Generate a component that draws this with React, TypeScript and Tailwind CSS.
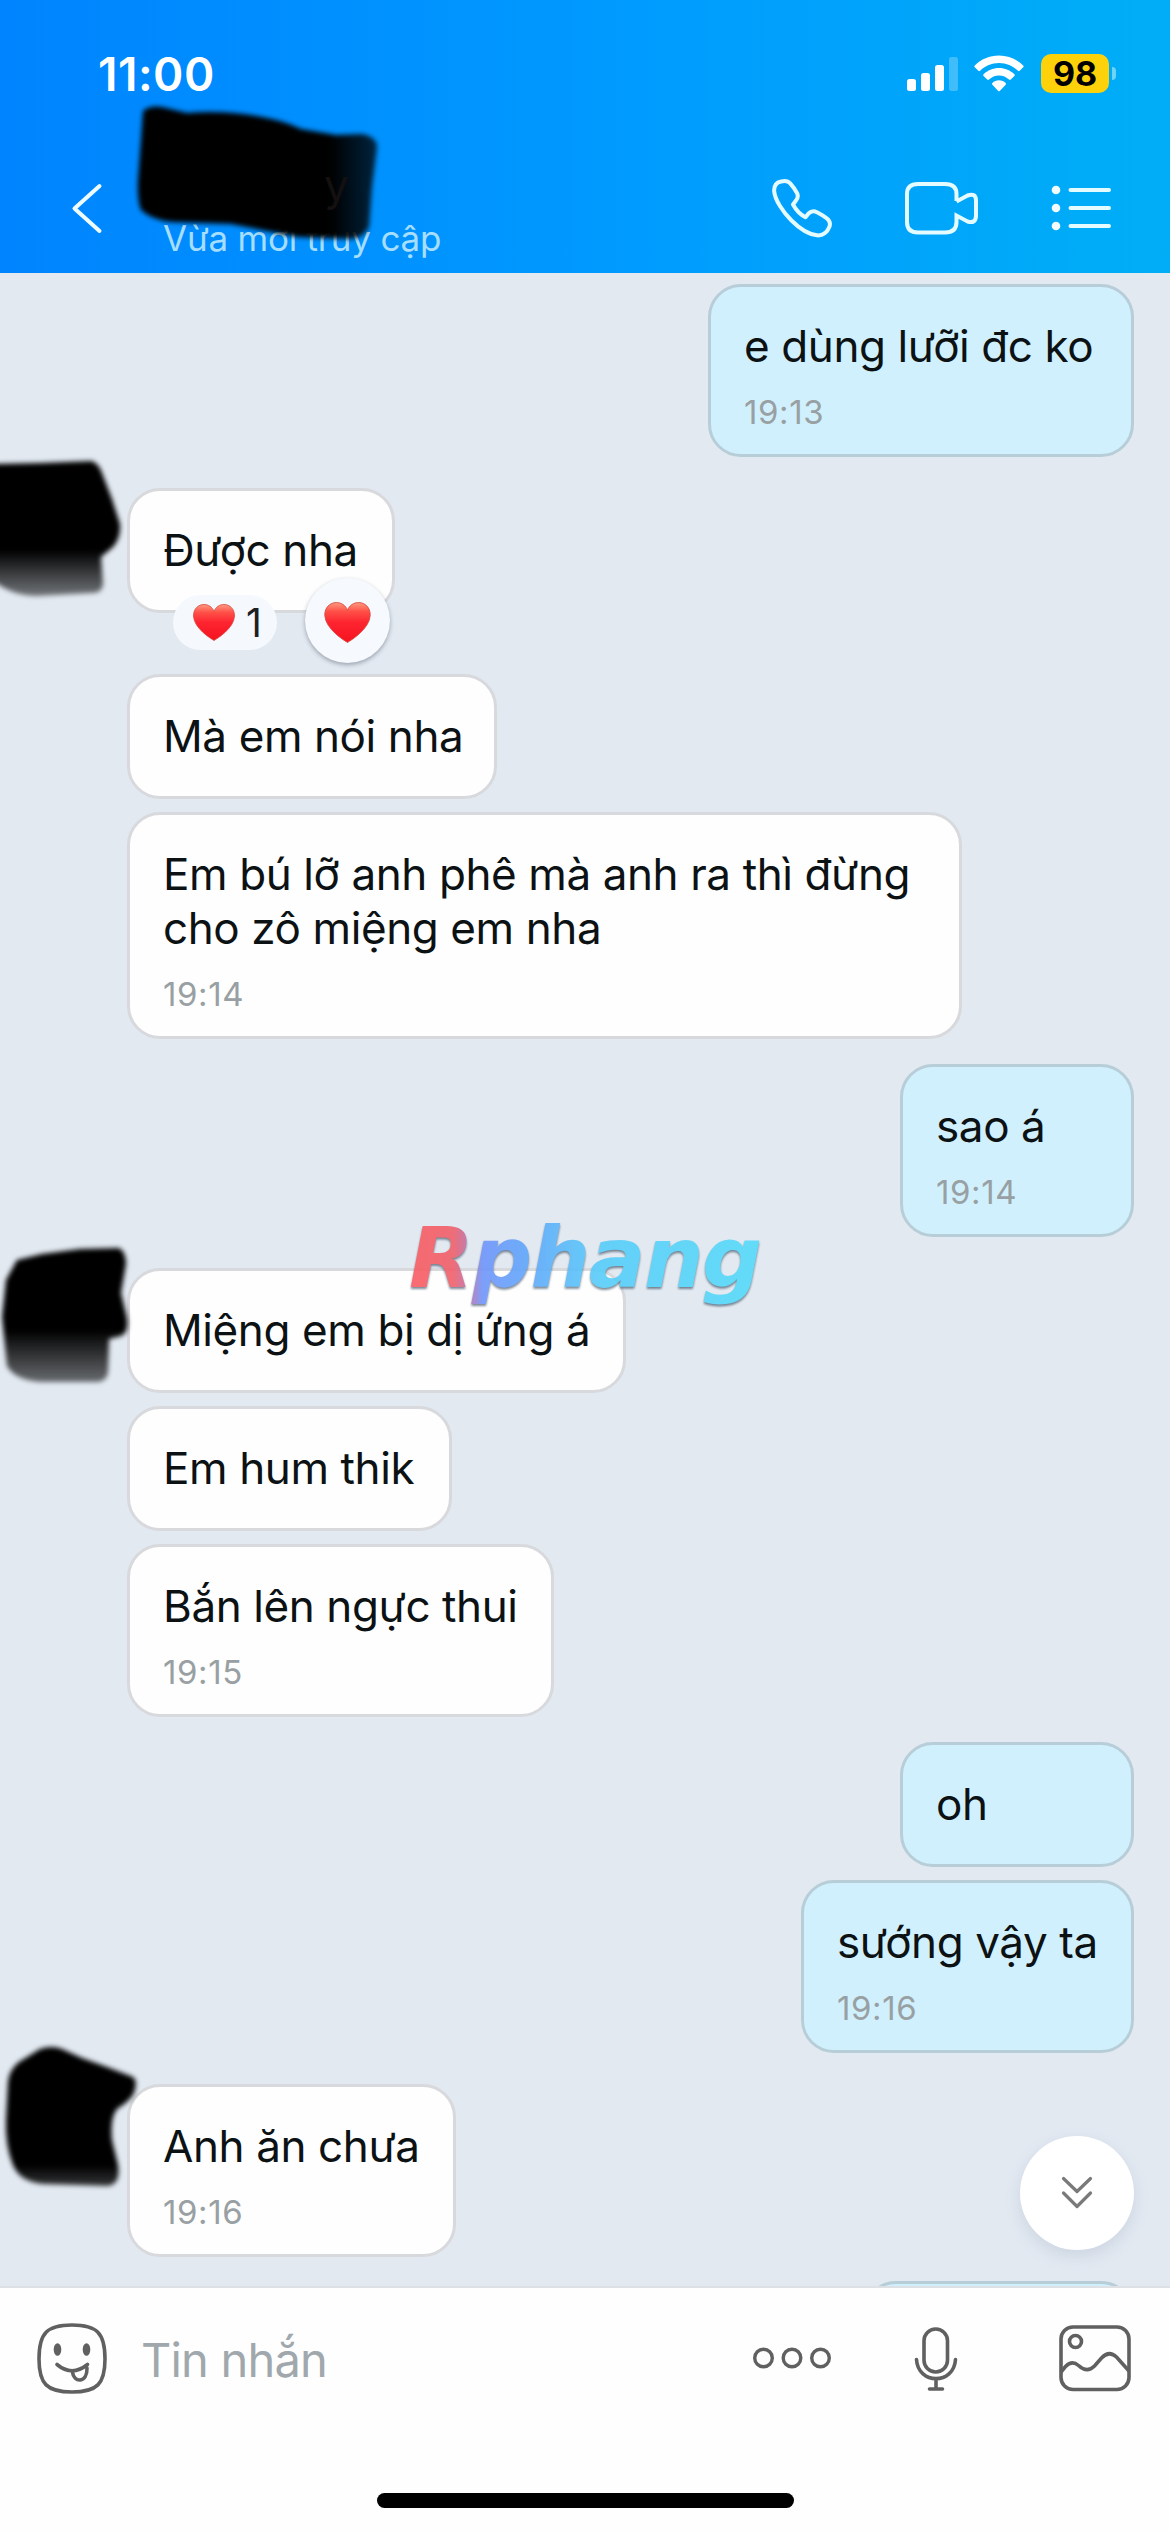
import type { ReactNode } from "react";

type BubbleProps = {
  text: ReactNode;
  time?: string;
  own?: boolean;
  className?: string;
  children?: ReactNode;
};

function Bubble({ text, time, own, className = "", children }: BubbleProps) {
  const tone = own ? "bg-[#d1f0fd] border-[#b7ced8]" : "bg-[#fefefe] border-[#d8d9dd]";
  return (
    <div
      className={`relative shrink-0 rounded-[33px] border-[3px] pl-[33px] pt-[32px] ${
        time ? "pb-[22px]" : "pb-[33px]"
      } ${tone} ${className}`}
    >
      <div className="whitespace-nowrap text-[44px] leading-[54px] tracking-[-0.4px] text-[#0c1214]">{text}</div>
      {time && (
        <div className="mt-[19px] text-[33px] leading-[40px] tracking-[0.6px] text-[#98a0a3]">{time}</div>
      )}
      {children}
    </div>
  );
}

function Incoming({ avatar, className = "", children }: { avatar?: ReactNode; className?: string; children: ReactNode }) {
  return (
    <div className={`flex items-start ${className}`}>
      <div className="w-[127px] shrink-0">{avatar}</div>
      {children}
    </div>
  );
}

function Outgoing({ className = "", children }: { className?: string; children: ReactNode }) {
  return <div className={`flex justify-end pr-9 ${className}`}>{children}</div>;
}

function Scribble({ id, top, d, fade }: { id: string; top: number; d: string; fade: [number, number] }) {
  return (
    <svg className="relative z-10 block h-[125px] w-[127px] overflow-visible">
      <defs>
        <filter id={`${id}-soft`} x="-10%" y="-10%" width="120%" height="120%">
          <feGaussianBlur stdDeviation="2.6" />
        </filter>
        <linearGradient id={`${id}-fill`} gradientUnits="userSpaceOnUse" x1="0" x2="0" y1={fade[0]} y2={fade[1]}>
          <stop offset="0" stopColor="#000" />
          <stop offset="1" stopColor="#000" stopOpacity=".45" />
        </linearGradient>
      </defs>
      <g transform={`translate(0 ${-top})`}>
        <path d={d} fill={`url(#${id}-fill)`} filter={`url(#${id}-soft)`} />
      </g>
    </svg>
  );
}

function Heart({ className, id }: { className: string; id: string }) {
  return (
    <svg className={className} viewBox="0 0 42 37">
      <defs>
        <linearGradient id={id} x1="0" y1="0" x2="0" y2="1">
          <stop offset="0" stopColor="#ff9b80" />
          <stop offset=".22" stopColor="#ff5148" />
          <stop offset=".5" stopColor="#fd2430" />
          <stop offset="1" stopColor="#f5131f" />
        </linearGradient>
      </defs>
      <path
        d="M21 36.500C18.500 35 1 24.500 .5 12C.3 5 5.200 .5 11 .5c4.500 0 8.300 2.500 10 7c1.700-4.500 5.500-7 10-7c5.800 0 10.700 4.500 10.500 11.500C41 24.500 23.500 35 21 36.500z"
        fill={`url(#${id})`}
        stroke="#d9483f"
        strokeWidth=".8"
      />
    </svg>
  );
}

function StatusBar() {
  return (
    <div className="flex h-[144px] items-start justify-between pl-[98px] pr-[54px]">
      <div className="mt-[46px] text-[46px] font-semibold leading-[56px] tracking-[0.5px] text-white">11:00</div>
      <div className="mt-[52px] flex h-[43px] items-center">
        <svg className="h-[36px] w-[52px]" viewBox="0 0 52 36" fill="#fff">
          <rect x="0" y="23" width="9" height="12" rx="2.500" />
          <rect x="14" y="17" width="9" height="18" rx="2.500" />
          <rect x="28" y="9" width="9" height="26" rx="2.500" />
          <rect x="42" y="1" width="9" height="34" rx="2.500" opacity=".25" />
        </svg>
        <svg className="ml-[15px] h-[37px] w-[50px]" viewBox="0 0 50 37" fill="#fff">
          <path d="M25 .5C15.500 .5 7 4.300 .8 10.500c-.6.600-.6 1.200 0 1.800l3.500 3.500c.6.600 1.200.6 1.800 0C11 11 17.700 8 25 8s14 3 18.900 7.800c.6.600 1.200.6 1.800 0l3.500-3.500c.6-.6.600-1.200 0-1.800C43 4.300 34.500.5 25 .5z" />
          <path d="M25 13c-6 0-11.400 2.400-15.400 6.200c-.6.600-.6 1.200 0 1.800l3.600 3.600c.6.600 1.200.5 1.800 0C17.600 22.100 21.100 20.500 25 20.500s7.400 1.600 10 4.100c.6.500 1.200.6 1.800 0l3.600-3.600c.6-.6.600-1.200 0-1.800C36.400 15.400 31 13 25 13z" />
          <path d="M25 25.300c-2.600 0-4.900 1-6.600 2.700c-.6.600-.5 1.100 0 1.700l5.600 6c.7.700 1.300.7 2 0l5.600-6c.5-.6.600-1.100 0-1.700C29.900 26.300 27.600 25.300 25 25.300z" />
        </svg>
        <div className="ml-[17px] flex h-[39px] w-[68px] items-center justify-center rounded-[10px] bg-[#fdd20a] text-[34px] font-bold leading-[39px] text-black">
          98
        </div>
        <div className="ml-[3px] h-[13px] w-[4px] rounded-r-full bg-[#6fd3f6]" />
      </div>
    </div>
  );
}

function Header() {
  return (
    <header className="relative z-10 h-[273px] shrink-0 bg-gradient-to-r from-[#0084ff] via-[#0099ff] to-[#00aef6]">
      <StatusBar />
      <div className="flex h-[129px] items-start">
        <svg className="ml-[70px] mt-[38px] h-[52px] w-[34px]" viewBox="0 0 34 52" fill="none" stroke="#effcff" strokeWidth="4" strokeLinecap="round" strokeLinejoin="round">
          <path d="M29.500 4L4.500 26.500L29.500 49" />
        </svg>
        <div className="relative ml-[59px] mt-[70px] flex-1">
          <div className="whitespace-nowrap text-[35px] leading-[48px] tracking-[-0.2px] text-[#a6deff]">Vừa mới truy cập</div>
          <svg className="absolute -left-[163px] -top-[214px] h-[273px] w-[500px]" viewBox="0 0 500 273">
            <defs>
              <filter id="name-soft" x="-10%" y="-10%" width="120%" height="120%">
                <feGaussianBlur stdDeviation="2.800" />
              </filter>
              <linearGradient id="name-fill" gradientUnits="userSpaceOnUse" x1="330" x2="378" y1="0" y2="0">
                <stop offset="0" stopColor="#000" />
                <stop offset="1" stopColor="#000" stopOpacity=".75" />
              </linearGradient>
            </defs>
            <path
              d="M143 111Q150 105 162 107L187 113Q225 110 262 117Q285 121 301 129L336 135L362 134Q377 137 377 147L372 187L369 227Q364 238 350 239L298 237L231 224L172 222Q152 220 141 210Q137 200 138 180L141 140Z"
              fill="url(#name-fill)"
              filter="url(#name-soft)"
            />
          </svg>
          <div className="absolute left-[161px] -top-[57px] text-[44px] leading-[56px] text-[#14100f]">y</div>
        </div>
        <div className="mt-[34px] flex items-center pr-[58px]">
          <svg className="h-[60px] w-[62px]" viewBox="0 0 62 60" fill="none" stroke="#e4fbff" strokeWidth="4" strokeLinejoin="round">
            <path d="M10 3.500C5.500 4.500 2.800 8 3.200 13.500C4 22 12 34 20.500 42.500C29 51 38 56.500 46 57.300C52 58 56.500 54 58.500 48.500C59.500 45.500 59 43 56 40.500C53 38 49.500 36 46 34.200C42.500 32.500 39.500 33.500 37.500 35.500L34.500 39.200C29 36.500 25 32 22 26.500L25 22.500C27 20 27.300 17.500 26 15C24 11.500 21.500 8 19 5.200C17 2.800 13.500 2.600 10 3.500Z" />
          </svg>
          <svg className="ml-[70px] h-[56px] w-[76px]" viewBox="0 0 76 56" fill="none" stroke="#e4fbff" strokeWidth="4" strokeLinejoin="miter">
            <path d="M53.500 21V14Q53.500 4 42 4H15Q4 4 4 14V42Q4 52.500 15 52.500H42Q53.500 52.500 53.500 42V35.500L64.500 41.500Q73 44 73 35.500V20.500Q73 12.500 64.500 15.500L53.500 21.500" />
          </svg>
          <svg className="ml-[71px] h-[50px] w-[62px]" viewBox="0 0 62 50" stroke="#e4fbff" strokeWidth="4" strokeLinecap="round" fill="#f3fdff">
            <path d="M20.500 7H59M20.500 25H59M20.500 43H59" />
            <g stroke="none">
              <circle cx="6" cy="7" r="4.300" />
              <circle cx="6" cy="25" r="4.300" />
              <circle cx="6" cy="43" r="4.300" />
            </g>
          </svg>
        </div>
      </div>
    </header>
  );
}

function Composer() {
  return (
    <footer className="relative z-10 h-[246px] shrink-0 border-t-2 border-[#dde1e6] bg-[#fefefe]">
      <div className="flex h-[142px] items-center pl-[36px] pr-[38px]">
        <svg className="-mt-[2px] h-[72px] w-[72px]" viewBox="0 0 72 72" fill="none" stroke="#606060" strokeWidth="3.600" strokeLinecap="round">
          <path d="M36 3C61 3 69 11 69 37C69 62 61 70 36 70C11 70 3 62 3 37C3 11 11 3 36 3Z" />
          <ellipse cx="21.500" cy="27.500" rx="3.800" ry="6.300" fill="#606060" stroke="none" />
          <ellipse cx="50.500" cy="27.500" rx="3.800" ry="6.300" fill="#606060" stroke="none" />
          <path d="M21 42.500Q36 55 51.500 42.500" />
          <path d="M36.500 50C37.500 61 51.500 61.500 51 46" />
        </svg>
        <div className="ml-[33px] mt-[2px] flex-1 text-[47px] leading-[60px] tracking-[-0.8px] text-[#a0a8ad]">Tin nhắn</div>
        <svg className="-mt-[2px] h-[24px] w-[80px]" viewBox="0 0 80 24" fill="none" stroke="#606060" strokeWidth="3.400">
          <circle cx="11.500" cy="12" r="8.800" />
          <circle cx="40" cy="12" r="8.800" />
          <circle cx="68.500" cy="12" r="8.800" />
        </svg>
        <svg className="ml-[81px] h-[68px] w-[46px]" viewBox="0 0 46 68" fill="none" stroke="#606060" strokeWidth="3.600" strokeLinecap="round">
          <rect x="11" y="4" width="23.500" height="43" rx="11.700" />
          <path d="M3.500 34.500C5 60 41 60 42.500 34.500M23 54V64M16.500 64H29.500" />
        </svg>
        <svg className="-mt-[2px] ml-[99px] h-[68px] w-[74px]" viewBox="0 0 74 68" fill="none" stroke="#606060" strokeWidth="3.600">
          <rect x="3" y="3" width="68" height="62.500" rx="12" />
          <circle cx="17.500" cy="17.500" r="6" />
          <path d="M3 48L7.500 42.500Q14 36 20.500 41.500Q29 49.500 36.500 42L43.500 34Q51 26 58.500 33L71 47" />
        </svg>
      </div>
      <div className="flex justify-center pt-[63px]">
        <div className="h-[15px] w-[417px] rounded-full bg-black" />
      </div>
    </footer>
  );
}

export default function App() {
  return (
    <div className="relative flex h-[2532px] w-[1170px] flex-col overflow-hidden bg-[#e2e9f1] font-[Inter,'Noto_Sans',sans-serif]">
      <Header />

      <main className="relative flex h-[2013px] shrink-0 flex-col overflow-hidden pt-[11px]">
        <Outgoing>
          <Bubble own text="e dùng lưỡi đc ko" time="19:13" className="w-[426px]" />
        </Outgoing>

        <Incoming
          className="mt-[31px]"
          avatar={
            <Scribble
              id="a1"
              top={488}
              fade={[550, 600]}
              d="M-8 464L40 463L92 461Q99 464 102 473L112 499L120 524Q121 538 113 547L101 557L103 583Q103 593 92 593L37 596Q12 596 -8 580Z"
            />
          }
        >
          <Bubble text="Được nha" className="w-[268px]">
            <div className="absolute left-[43px] top-[104px] flex h-[55px] w-[104px] items-center rounded-full bg-[#f5f8fd] pl-[20px]">
              <Heart id="heart-count" className="h-[37px] w-[42px]" />
              <span className="ml-[11px] text-[39px] leading-[50px] text-[#1c2023]">1</span>
            </div>
            <div className="absolute left-[175px] top-[87px] flex h-[85px] w-[85px] items-center justify-center rounded-full bg-[#f6f9fd] shadow-[0_2px_4px_rgba(70,80,95,0.45)]">
              <Heart id="heart-button" className="mt-[4px] h-[41px] w-[47px]" />
            </div>
          </Bubble>
        </Incoming>
        <Incoming className="mt-[61px]">
          <Bubble text="Mà em nói nha" className="w-[370px]" />
        </Incoming>
        <Incoming className="mt-[13px]">
          <Bubble
            text={
              <>
                Em bú lỡ anh phê mà anh ra thì đừng
                <br />
                cho zô miệng em nha
              </>
            }
            time="19:14"
            className="w-[835px]"
          />
        </Incoming>

        <Outgoing className="mt-[25px]">
          <Bubble own text="sao á" time="19:14" className="w-[234px]" />
        </Outgoing>

        <Incoming
          className="mt-[31px]"
          avatar={
            <Scribble
              id="a2"
              top={1268}
              fade={[1330, 1392]}
              d="M17 1260L42 1254L80 1249L119 1248Q126 1252 126 1264L121 1293L127 1318Q129 1333 121 1336L109 1339L108 1372Q107 1381 98 1382L40 1382Q15 1380 7 1366L2 1317L6 1280Z"
            />
          }
        >
          <Bubble text="Miệng em bị dị ứng á" className="w-[499px]" />
        </Incoming>
        <Incoming className="mt-[13px]">
          <Bubble text="Em hum thik" className="w-[325px]" />
        </Incoming>
        <Incoming className="mt-[13px]">
          <Bubble text="Bắn lên ngực thui" time="19:15" className="w-[427px]" />
        </Incoming>

        <Outgoing className="mt-[25px]">
          <Bubble own text="oh" className="w-[234px]" />
        </Outgoing>
        <Outgoing className="mt-[13px]">
          <Bubble own text="sướng vậy ta" time="19:16" className="w-[333px]" />
        </Outgoing>

        <Incoming
          className="mt-[31px]"
          avatar={
            <Scribble
              id="a3"
              top={2084}
              fade={[2165, 2215]}
              d="M8 2082Q9 2070 19 2062L40 2049Q52 2045 62 2049L82 2058L107 2067L133 2077Q138 2081 134 2093Q131 2100 117 2109Q110 2118 112 2140L118 2165Q121 2184 108 2186L43 2184Q20 2182 13 2165Q5 2145 6 2120Z"
            />
          }
        >
          <Bubble text="Anh ăn chưa" time="19:16" className="w-[329px]" />
        </Incoming>

        <Outgoing className="mt-[24px]">
          <div className="h-[125px] w-[271px] shrink-0 rounded-[33px] border-[3px] border-[#b7ced8] bg-[#d1f0fd]" />
        </Outgoing>

        <button className="absolute bottom-[36px] right-[36px] flex h-[114px] w-[114px] items-center justify-center rounded-full bg-white shadow-[0_6px_16px_rgba(120,135,165,0.2)]">
          <svg className="-mt-[2px] h-[34px] w-[34px]" viewBox="0 0 34 34" fill="none" stroke="#7a7a7a" strokeWidth="3.200" strokeLinecap="round" strokeLinejoin="round">
            <path d="M3.500 3.500L17 16.500L30.500 3.500M3.500 18L17 31.500L30.500 18" />
          </svg>
        </button>
      </main>

      <Composer />

      <div className="absolute left-[409px] top-[1208px] z-20 whitespace-nowrap bg-[linear-gradient(90deg,#fa5c62_0%,#f0606a_12%,#c070a8_16%,#6f95fa_20%,#5fa8fa_33%,#57cdf9_52%,#56dcf9_100%)] bg-clip-text pr-4 font-['DejaVu_Sans'] text-[84px] font-bold italic leading-[100px] tracking-[-1.6px] text-transparent opacity-90 drop-shadow-[0_2px_1px_rgba(50,70,90,0.7)]">
        Rphang
      </div>
    </div>
  );
}
